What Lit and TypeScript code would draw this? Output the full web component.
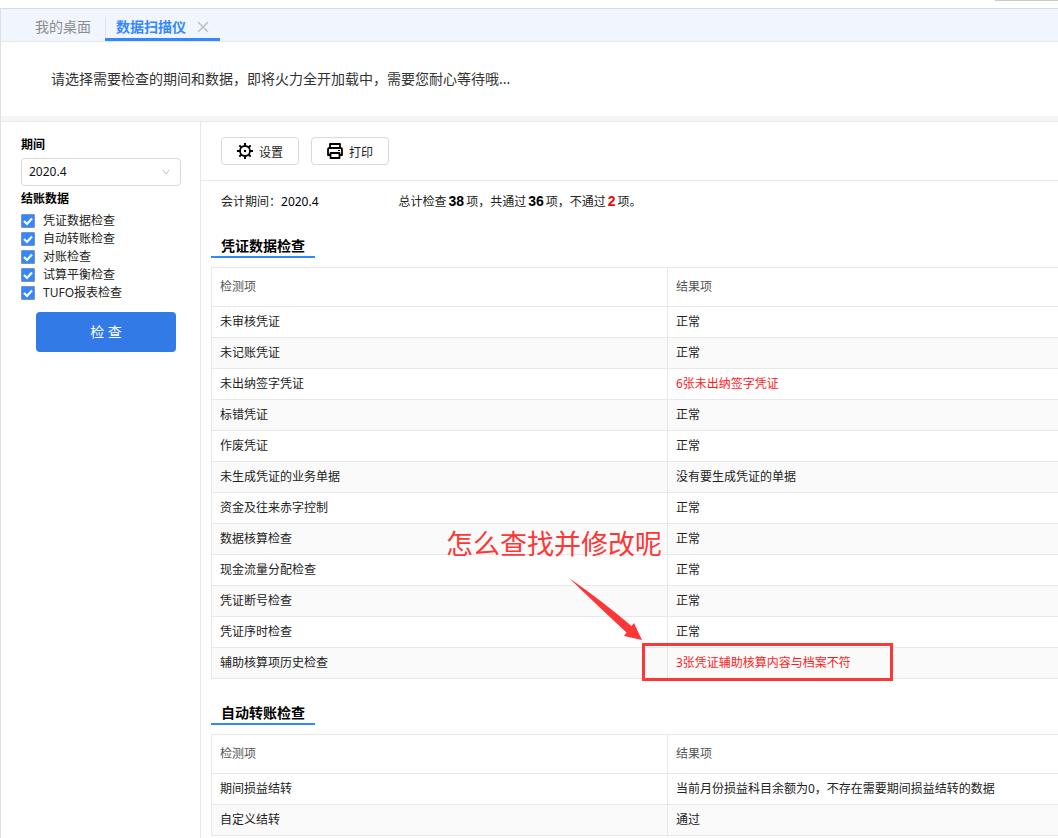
import { LitElement, html, css, svg } from "lit";
import { customElement, property } from "lit/decorators.js";

interface CheckRow {
  item: string;
  result: string;
  failed?: boolean;
}

const VOUCHER_ROWS: CheckRow[] = [
  { item: "未审核凭证", result: "正常" },
  { item: "未记账凭证", result: "正常" },
  { item: "未出纳签字凭证", result: "6张未出纳签字凭证", failed: true },
  { item: "标错凭证", result: "正常" },
  { item: "作废凭证", result: "正常" },
  { item: "未生成凭证的业务单据", result: "没有要生成凭证的单据" },
  { item: "资金及往来赤字控制", result: "正常" },
  { item: "数据核算检查", result: "正常" },
  { item: "现金流量分配检查", result: "正常" },
  { item: "凭证断号检查", result: "正常" },
  { item: "凭证序时检查", result: "正常" },
  { item: "辅助核算项历史检查", result: "3张凭证辅助核算内容与档案不符", failed: true },
];

const TRANSFER_ROWS: CheckRow[] = [
  { item: "期间损益结转", result: "当前月份损益科目余额为0，不存在需要期间损益结转的数据" },
  { item: "自定义结转", result: "通过" },
];

const CHECK_OPTIONS = ["凭证数据检查", "自动转账检查", "对账检查", "试算平衡检查", "TUFO报表检查"];

const GEAR_TEETH = [0, 45, 90, 135, 180, 225, 270, 315];

const gearIcon = svg`
  <svg class="icon" viewBox="0 0 16 16" width="16" height="16" aria-hidden="true">
    <circle cx="8" cy="8" r="5" fill="none" stroke="#000" stroke-width="1.8" />
    <circle cx="8" cy="8" r="1.2" fill="#000" />
    ${GEAR_TEETH.map(
      (angle) => svg`<rect x="7" y="0" width="2" height="3" fill="#000" transform="rotate(${angle} 8 8)" />`
    )}
  </svg>`;

const printerIcon = svg`
  <svg class="icon" viewBox="0 0 16 16" width="16" height="16" aria-hidden="true">
    <g fill="none" stroke="#000" stroke-width="1.8" stroke-linejoin="round">
      <path d="M3 5V1h10v4" />
      <path d="M3 12H1V6.5Q1 5 2.500 5h11Q15 5 15 6.500V12h-2" />
      <path d="M3.500 10h9v5h-9z" />
    </g>
    <rect x="11" y="7" width="2" height="1" fill="#000" />
  </svg>`;

@customElement("check-table")
class CheckTable extends LitElement {
  @property() heading = "";
  @property({ attribute: false }) rows: CheckRow[] = [];

  static styles = css`
    :host {
      display: block;
    }
    .heading {
      display: inline-block;
      margin: 0 0 9px;
      padding: 0 10px;
      border-bottom: 2px solid #3388ff;
      font-size: 14px;
      line-height: 20px;
      font-weight: 700;
      color: #000;
    }
    .table {
      width: 100%;
      table-layout: fixed;
      border-collapse: separate;
      border-spacing: 0;
      border-top: 1px solid #e8e8e8;
    }
    .item-column {
      width: 456px;
    }
    .cell {
      box-sizing: border-box;
      padding: 0 8px;
      border-left: 1px solid #e8e8e8;
      border-bottom: 1px solid #e8e8e8;
      line-height: 30px;
      font-weight: 400;
      text-align: left;
      white-space: nowrap;
      color: #222;
    }
    .head {
      line-height: 38px;
      color: #555;
    }
    .row:nth-child(even) .cell {
      background: #fafafa;
    }
    .failed {
      color: #ff1a1a;
    }
  `;

  render() {
    return html`
      <h2 class="heading">${this.heading}</h2>
      <table class="table" aria-label=${this.heading}>
        <colgroup>
          <col class="item-column" />
          <col />
        </colgroup>
        <thead>
          <tr>
            <th class="cell head" scope="col">检测项</th>
            <th class="cell head" scope="col">结果项</th>
          </tr>
        </thead>
        <tbody>
          ${this.rows.map(
            (row) => html`<tr class="row">
              <td class="cell">${row.item}</td>
              <td class="cell ${row.failed ? "failed" : ""}">${row.result}</td>
            </tr>`
          )}
        </tbody>
      </table>
    `;
  }
}

@customElement("app-root")
class AppRoot extends LitElement {
  static styles = css`
    :host {
      display: block;
      overflow: hidden;
      background: #fff;
      color: #222;
      font: 12px/18px "Noto Sans", "Noto Sans CJK SC", sans-serif;
    }
    button,
    select,
    input {
      margin: 0;
      font: inherit;
      color: inherit;
    }
    .app {
      display: flex;
      flex-direction: column;
      min-height: 100vh;
      box-sizing: border-box;
    }
    .top-edge {
      display: flex;
      justify-content: flex-end;
      height: 8px;
    }
    .top-line {
      width: 63px;
      height: 1px;
      background: #c8c8c8;
    }
    .frame {
      display: flex;
      flex-direction: column;
      flex: 1;
      border-top: 1px solid #dadcde;
      border-left: 1px solid #e0e0e0;
    }
    .tabs {
      display: flex;
      align-items: flex-end;
      height: 32px;
      padding-left: 34px;
      border-bottom: 1px solid #e4e7eb;
      background: #f0f5fe;
      font-size: 14px;
      line-height: 20px;
    }
    .tab {
      padding: 0 14px 4px 0;
      color: #8c8c8c;
      text-decoration: none;
    }
    .tab-active {
      display: flex;
      align-items: center;
      gap: 10px;
      height: 20px;
      padding: 0 10px 1px;
      border-left: 1px solid #dfe3ea;
    }
    .tab-group {
      border-bottom: 3px solid #3388ff;
    }
    .tab-current {
      color: #3388ff;
      font-weight: 700;
      text-decoration: none;
    }
    .tab-close {
      display: flex;
      padding: 0;
      border: 0;
      background: none;
    }
    .banner {
      margin: 0;
      padding: 27px 50px;
      border-bottom: 5px solid #f5f5f5;
      font-size: 14px;
      line-height: 20px;
      color: #333;
    }
    .columns {
      display: flex;
      flex: 1;
      border-top: 1px solid #e8e8e8;
    }
    .sidebar {
      display: flex;
      flex-direction: column;
      flex: none;
      width: 160px;
      padding: 14px 19px 14px 20px;
      border-right: 1px solid #e8e8e8;
    }
    .field-label {
      padding: 0;
      font-weight: 700;
      color: #000;
    }
    .select-box {
      position: relative;
      margin: 4px 0;
    }
    .select {
      display: block;
      width: 100%;
      height: 28px;
      padding: 0 7px;
      border: 1px solid #d9d9d9;
      border-radius: 4px;
      background: #fff;
      appearance: none;
      color: #111;
    }
    .chevron {
      position: absolute;
      top: 10px;
      right: 11px;
      pointer-events: none;
    }
    .options {
      margin: 0 0 10px;
      padding: 0;
      border: 0;
    }
    .options-title {
      margin-bottom: 4px;
    }
    .option {
      display: flex;
      align-items: center;
      gap: 8px;
    }
    .checkbox {
      width: 14px;
      height: 14px;
      border: 1px solid #7f93b2;
      border-radius: 1px;
      appearance: none;
    }
    .checkbox:checked {
      background: #3388ff
        url("data:image/svg+xml,%3Csvg xmlns='http://www.w3.org/2000/svg' viewBox='0 0 12 12'%3E%3Cpath d='M2 6l3 3 5-5.500' fill='none' stroke='white' stroke-width='2.200'/%3E%3C/svg%3E")
        center / 12px 12px no-repeat;
    }
    .submit {
      height: 40px;
      margin: 0 5px 0 15px;
      border: 0;
      border-radius: 4px;
      background: #327ae6;
      color: #fff;
      font-size: 14px;
    }
    .main {
      flex: 1;
      min-width: 0;
    }
    .toolbar {
      display: flex;
      gap: 12px;
      padding: 15px 20px;
      border-bottom: 1px solid #e8e8e8;
    }
    .tool {
      display: flex;
      align-items: center;
      gap: 6px;
      box-sizing: border-box;
      height: 28px;
      padding: 0 15px;
      border: 1px solid #d9d9d9;
      border-radius: 4px;
      background: #fff;
    }
    .tool-text {
      padding-top: 4px;
    }
    .summary {
      display: flex;
      gap: 80px;
      padding: 12px 20px 25px;
    }
    .period,
    .count {
      color: #000;
    }
    .count {
      font-family: "Liberation Sans", Arial, sans-serif;
      font-size: 14px;
      line-height: 16px;
      padding: 0 2px;
    }
    .count-failed {
      color: #f00;
    }
    .sections {
      display: flex;
      flex-direction: column;
      gap: 24px;
      padding-left: 10px;
    }
    .annotated {
      position: relative;
    }
    .note {
      position: absolute;
      left: 235px;
      bottom: 115px;
      font-size: 27px;
      line-height: 40px;
      color: #fc3737;
      white-space: nowrap;
    }
    .arrow {
      position: absolute;
      left: 357px;
      bottom: 38px;
    }
    .highlight {
      position: absolute;
      left: 431px;
      bottom: -2px;
      box-sizing: border-box;
      width: 251px;
      height: 38px;
      border: 3px solid #fc3737;
    }
  `;

  render() {
    return html`
      <div class="app">
        <div class="top-edge"><div class="top-line"></div></div>
        <div class="frame">
          <nav class="tabs">
            <a class="tab" href="#desktop">我的桌面</a>
            <div class="tab-group">
              <div class="tab-active">
                <a class="tab-current" href="#scanner" aria-current="page">数据扫描仪</a>
                <button class="tab-close" type="button" aria-label="关闭">
                  <svg viewBox="0 0 14 14" width="14" height="14">
                    <path d="M2 2l10 10M12 2L2 12" stroke="#bcc0c6" stroke-width="1.5" />
                  </svg>
                </button>
              </div>
            </div>
          </nav>
          <p class="banner">请选择需要检查的期间和数据，即将火力全开加载中，需要您耐心等待哦...</p>
          <div class="columns">
            <aside class="sidebar">
              <label class="field-label" for="period">期间</label>
              <div class="select-box">
                <select class="select" id="period">
                  <option>2020.4</option>
                </select>
                <svg class="chevron" viewBox="0 0 8 8" width="8" height="8" aria-hidden="true">
                  <path d="M1 2l3 4 3-4" fill="none" stroke="#bfbfbf" />
                </svg>
              </div>
              <fieldset class="options">
                <legend class="field-label options-title">结账数据</legend>
                ${CHECK_OPTIONS.map(
                  (name) => html`<label class="option">
                    <input class="checkbox" type="checkbox" checked />${name}
                  </label>`
                )}
              </fieldset>
              <button class="submit" type="button">检 查</button>
            </aside>
            <main class="main">
              <div class="toolbar">
                <button class="tool" type="button">${gearIcon}<span class="tool-text">设置</span></button>
                <button class="tool" type="button">${printerIcon}<span class="tool-text">打印</span></button>
              </div>
              <div class="summary">
                <span>会计期间：<span class="period">2020.4</span></span>
                <span
                  >总计检查<b class="count">38</b>项，共通过<b class="count">36</b>项，不通过<b
                    class="count count-failed"
                    >2</b
                  >项。</span
                >
              </div>
              <div class="sections">
                <div class="annotated">
                  <check-table heading="凭证数据检查" .rows=${VOUCHER_ROWS}></check-table>
                  <div class="note">怎么查找并修改呢</div>
                  <svg class="arrow" viewBox="0 0 76 64" width="76" height="64" aria-hidden="true">
                    <path d="M1 1Q33 23 63.500 49L66 46L74 63L56 59L58.500 55.500Q32 31 1 1Z" fill="#fc3737" />
                  </svg>
                  <div class="highlight"></div>
                </div>
                <check-table heading="自动转账检查" .rows=${TRANSFER_ROWS}></check-table>
              </div>
            </main>
          </div>
        </div>
      </div>
    `;
  }
}
